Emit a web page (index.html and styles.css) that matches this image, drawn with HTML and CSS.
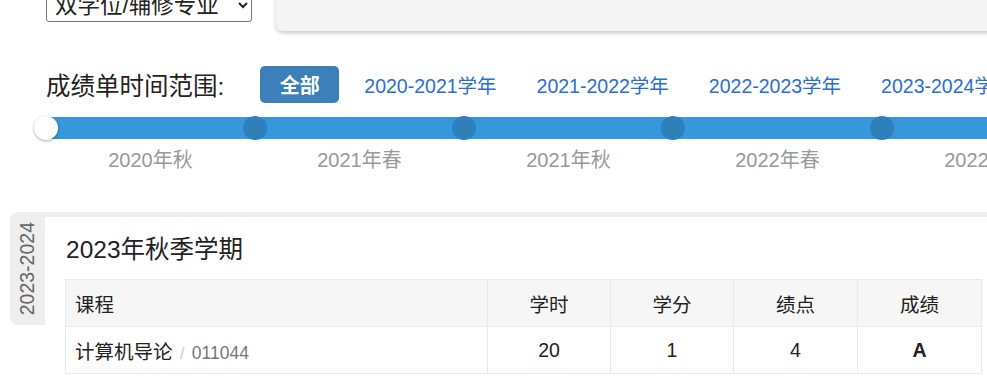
FILE: index.html
```html
<!DOCTYPE html>
<html lang="zh-CN">
<head>
  <meta charset="UTF-8">
  <meta name="viewport" content="width=device-width, initial-scale=1.0">
  <title>成绩单</title>
  <link rel="stylesheet" href="styles.css">
</head>
<body>
  <div class="page">

    <!--TOP-->
    <div class="top">
      <select class="major-select">
        <option>双学位/辅修专业</option>
      </select>
      <div class="summary">
        <div class="stat"><span>总学分</span></div>
        <div class="stat"><span>平均绩点</span></div>
        <div class="stat"><span>课程数量</span></div>
      </div>
    </div>

    <!--FILTER-->
    <div class="filter">
      <span class="filter-label">成绩单时间范围:</span>
      <button class="btn-all">全部</button>
      <a class="year-link" href="#">2020-2021学年</a>
      <a class="year-link" href="#">2021-2022学年</a>
      <a class="year-link" href="#">2022-2023学年</a>
      <a class="year-link" href="#">2023-2024学年</a>
    </div>

    <div class="slider">
      <span class="handle"></span>
      <span class="dot"></span>
      <span class="dot"></span>
      <span class="dot"></span>
      <span class="dot"></span>
    </div>
    <div class="marks">
      <span>2020年秋</span>
      <span>2021年春</span>
      <span>2021年秋</span>
      <span>2022年春</span>
      <span>2022年秋</span>
    </div>

    <!--TERMS-->
    <div class="year-block">
      <div class="year-tab"><span>2023-2024</span></div>
      <div class="year-body">
        <h2 class="term-title">2023年秋季学期</h2>
        <table class="grades">
          <colgroup>
            <col class="w-course">
            <col class="w-num">
            <col class="w-num">
            <col class="w-wide">
            <col class="w-wide">
          </colgroup>
          <thead>
            <tr>
              <th class="col-course">课程</th>
              <th>学时</th>
              <th>学分</th>
              <th>绩点</th>
              <th>成绩</th>
            </tr>
          </thead>
          <tbody>
            <tr>
              <td class="col-course">计算机导论 <span class="sep">/</span> <span class="code">011044</span></td>
              <td>20</td>
              <td>1</td>
              <td>4</td>
              <td class="score">A</td>
            </tr>
          </tbody>
        </table>
      </div>
    </div>

  </div>
</body>
</html>
```

FILE: styles.css
```css
body {
  margin: 0;
  font-family: "Liberation Sans", "Noto Sans CJK SC", sans-serif;
  color: #222222;
  background: #ffffff;
  overflow: hidden;
}
.page {
  margin-top: -60px;
}
.top {
  display: flex;
  align-items: flex-start;
  gap: 24px;
  padding-left: 46px;
}
.major-select {
  flex-shrink: 0;
  margin-top: 49px;
  width: 206px;
  height: 33px;
  font-family: inherit;
  font-size: 22.5px;
  color: #222222;
  background: #ffffff;
  border: 1px solid #767676;
  border-radius: 3px;
  padding: 0 4px;
}
.summary {
  flex: 0 0 760px;
  height: 91px;
  background: #f4f4f4;
  border-radius: 7px;
  box-shadow: 0 2px 4px rgba(0, 0, 0, 0.22);
  display: flex;
  padding-left: 32px;
  box-sizing: border-box;
}
.stat {
  width: 258px;
  padding-top: 37px;
  font-size: 22px;
  color: #888888;
  line-height: 24px;
}
.filter {
  display: flex;
  align-items: center;
  margin-top: 35px;
  padding-left: 46px;
  height: 37px;
  white-space: nowrap;
}
.filter > * {
  flex-shrink: 0;
}
.filter-label {
  font-size: 24.5px;
  color: #222222;
}
.btn-all {
  margin-left: 36px;
  width: 79px;
  height: 37px;
  border: none;
  border-radius: 5px;
  background: #3d7fb8;
  color: #ffffff;
  font-family: inherit;
  font-size: 20px;
  font-weight: bold;
}
.year-link {
  margin-left: 25px;
  margin-right: 15px;
  font-size: 19.5px;
  color: #2a6fcf;
  text-decoration: none;
}
.slider {
  display: flex;
  align-items: center;
  gap: 185px;
  margin-top: 13px;
  margin-left: 34px;
  height: 24px;
  width: 1200px;
  background: linear-gradient(#3797db, #3797db) 12px 1px / 100% 22px no-repeat;
}
.slider span {
  flex: 0 0 24px;
  height: 24px;
  border-radius: 50%;
}
.handle {
  background: #ffffff;
  box-shadow: 0 1px 3px rgba(0, 0, 0, 0.35);
}
.dot {
  background: #2e80ba;
}
.marks {
  display: flex;
  margin-left: 46px;
  margin-top: 8px;
  width: 1200px;
}
.marks span {
  flex: 0 0 209px;
  text-align: center;
  font-size: 20px;
  color: #999999;
  line-height: 24px;
}
.year-block {
  display: flex;
  margin-top: 40px;
  margin-left: 10px;
}
.year-tab {
  flex: 0 0 35px;
  height: 113px;
  background: #eeeeee;
  border-radius: 8px 0 0 8px;
  display: flex;
  justify-content: center;
  align-items: center;
}
.year-tab span {
  writing-mode: vertical-rl;
  transform: rotate(180deg);
  font-size: 19.5px;
  color: #666666;
}
.year-body {
  flex: 1;
  border-top: 5px solid #eeeeee;
  padding-left: 20px;
  padding-right: 6px;
}
.term-title {
  margin: 0;
  padding: 17px 0 13px 1px;
  font-size: 24.5px;
  font-weight: normal;
  line-height: 32px;
  color: #222222;
}
.grades {
  width: 916px;
  table-layout: fixed;
  border-collapse: collapse;
  font-size: 19.5px;
}
.w-course {
  width: 422px;
}
.w-num {
  width: 123px;
}
.w-wide {
  width: 124px;
}
.grades th,
.grades td {
  border: 1px solid #e8eaf0;
  height: 46px;
  padding: 0 9px;
  text-align: center;
  font-weight: normal;
  color: #222222;
}
.grades th {
  background: #f6f6f6;
}
.grades .col-course {
  text-align: left;
}
.sep {
  color: #cccccc;
  font-size: 16px;
  margin: 0 2px;
}
.code {
  font-size: 17.5px;
  color: #777777;
}
.grades .score {
  font-weight: bold;
}
```
